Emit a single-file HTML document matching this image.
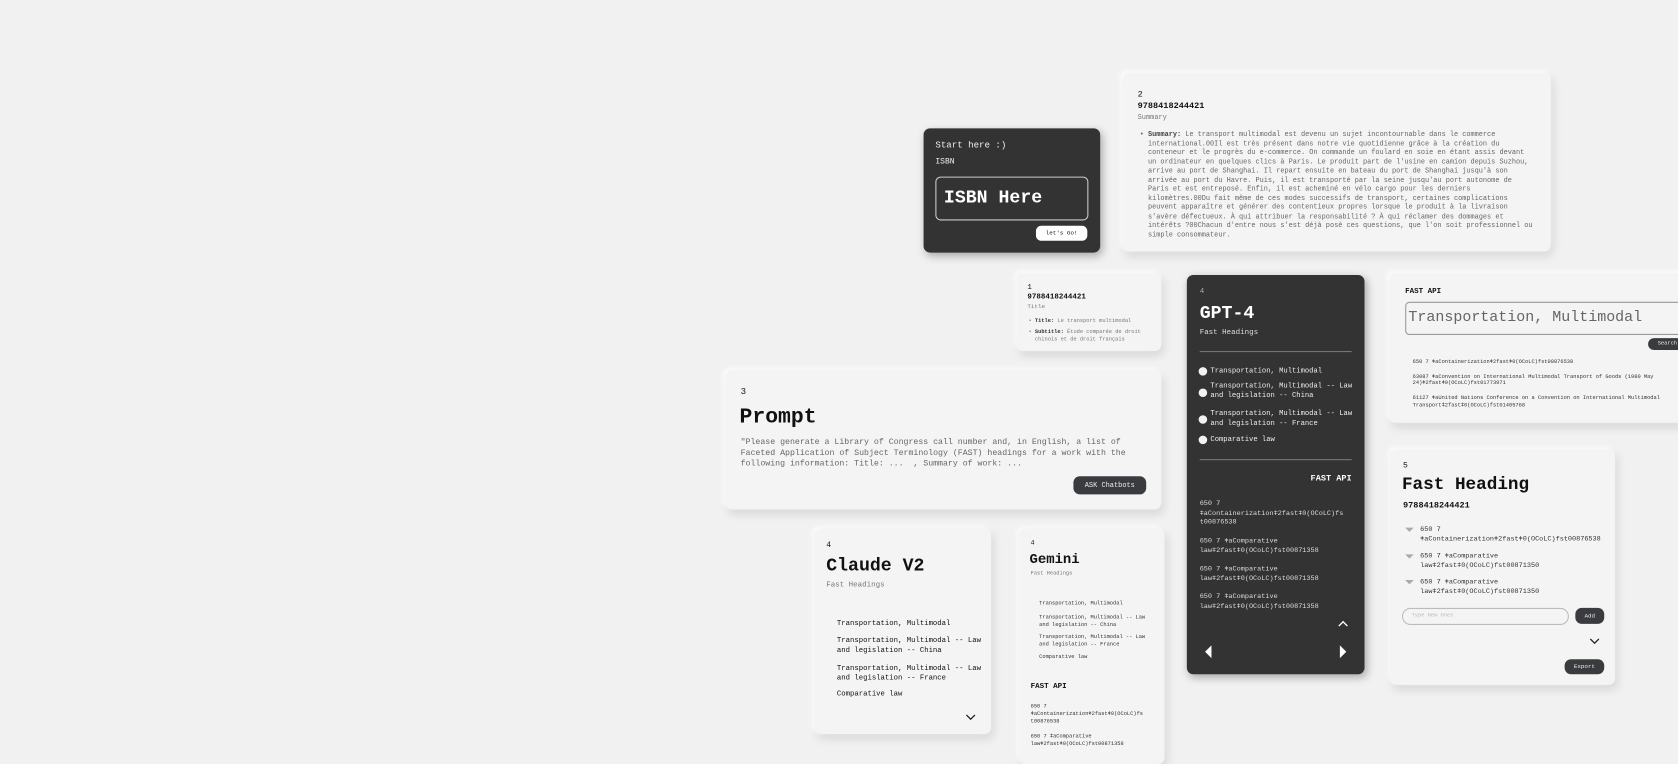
<!DOCTYPE html>
<html><head><meta charset="utf-8"><style>
html,body{margin:0;padding:0;background:#f1f1f1;width:1678px;height:748px;overflow:hidden}
#w{position:absolute;left:0;top:0;width:1568px;height:699px;transform:scale(1.0702);transform-origin:0 0;font-family:"Liberation Mono","DejaVu Sans Mono",monospace;color:#111}
.c{position:absolute;background:#f4f4f4;border-radius:6px;box-shadow:-2px -2px 5px rgba(255,255,255,.8),2px 4px 9px rgba(0,0,0,.12)}
.d{position:absolute;background:#333;border-radius:6px;box-shadow:2px 3px 8px rgba(0,0,0,.3);color:#eee}
.a{position:absolute;white-space:nowrap;line-height:1}
.b{font-weight:bold}
.g{color:#777}
.btn{position:absolute;background:#3a3b3e;color:#eee;border-radius:6px;text-align:center}
.dot{position:absolute;width:8px;height:8px;border-radius:50%;background:#f2f2f2}
.tri{position:absolute;width:0;height:0;border-left:4px solid transparent;border-right:4px solid transparent;border-top:4px solid #aaa}
</style></head><body><div id="w">

<div class="d" style="left:863px;top:120px;width:165px;height:116px">
<div class="a" style="left:11px;top:12px;font-size:8.5px">Start here :)</div>
<div class="a" style="left:11px;top:29px;font-size:7.5px">ISBN</div>
<div style="position:absolute;left:11px;top:45px;width:141px;height:39px;border:1px solid #ccc;border-radius:5px"></div>
<div class="a b" style="left:19px;top:57px;font-size:17px;color:#fff">ISBN Here</div>
<div style="position:absolute;left:105px;top:91px;width:48px;height:14px;background:#fff;border-radius:5px;color:#111;font-size:5.5px;text-align:center;line-height:14px">let's Go!</div>
</div>

<div class="c" style="left:1049px;top:68px;width:400px;height:167px">
<div class="a" style="left:14px;top:17px;font-size:8px">2</div>
<div class="a b" style="left:14px;top:28px;font-size:8px">9788418244421</div>
<div class="a g" style="left:14px;top:39px;font-size:6.5px">Summary</div>
<div style="position:absolute;left:16px;top:54px;font-size:6.45px;line-height:8.55px;color:#666;white-space:pre">• <b style="color:#444">Summary:</b> Le transport multimodal est devenu un sujet incontournable dans le commerce
  international.00Il est très présent dans notre vie quotidienne grâce à la création du
  conteneur et le progrès du e-commerce. On commande un foulard en soie en étant assis devant
  un ordinateur en quelques clics à Paris. Le produit part de l'usine en camion depuis Suzhou,
  arrive au port de Shanghai. Il repart ensuite en bateau du port de Shanghai jusqu'à son
  arrivée au port du Havre. Puis, il est transporté par la seine jusqu'au port autonome de
  Paris et est entreposé. Enfin, il est acheminé en vélo cargo pour les derniers
  kilomètres.00Du fait même de ces modes successifs de transport, certaines complications
  peuvent apparaître et générer des contentieux propres lorsque le produit à la livraison
  s'avère défectueux. À qui attribuer la responsabilité ? À qui réclamer des dommages et
  intérêts ?00Chacun d'entre nous s'est déjà posé ces questions, que l'on soit professionnel ou
  simple consommateur.</div>
</div>

<div class="c" style="left:950px;top:255px;width:135px;height:73px">
<div class="a" style="left:10px;top:11px;font-size:7px">1</div>
<div class="a b" style="left:10px;top:20px;font-size:7px">9788418244421</div>
<div class="a g" style="left:10px;top:29px;font-size:5.5px">Title</div>
<div style="position:absolute;left:11px;top:42px;font-size:5px;line-height:6.5px;color:#777;white-space:pre">• <b style="color:#333">Title:</b> Le transport multimodal</div>
<div style="position:absolute;left:11px;top:52px;font-size:5px;line-height:6.5px;color:#777;white-space:pre">• <b style="color:#333">Subtitle:</b> Étude comparée de droit
  chinois et de droit français</div>
</div>

<div class="d" style="left:1109px;top:257px;width:166px;height:373px">
<div class="a" style="left:12px;top:13px;font-size:7px;color:#aaa">4</div>
<div class="a b" style="left:12px;top:28px;font-size:17px;color:#fff">GPT-4</div>
<div class="a" style="left:12px;top:51px;font-size:7px;color:#ddd">Fast Headings</div>
<div style="position:absolute;left:12px;top:71px;width:142px;height:1px;background:#777"></div>
<div class="dot" style="left:11px;top:86px"></div>
<div style="position:absolute;left:22px;top:86px;font-size:6.7px;line-height:9px;white-space:pre">Transportation, Multimodal</div>
<div class="dot" style="left:11px;top:106px"></div>
<div style="position:absolute;left:22px;top:100px;font-size:6.7px;line-height:9px;white-space:pre">Transportation, Multimodal -- Law
and legislation -- China</div>
<div class="dot" style="left:11px;top:131px"></div>
<div style="position:absolute;left:22px;top:126px;font-size:6.7px;line-height:9px;white-space:pre">Transportation, Multimodal -- Law
and legislation -- France</div>
<div class="dot" style="left:11px;top:150px"></div>
<div style="position:absolute;left:22px;top:150px;font-size:6.7px;line-height:9px;white-space:pre">Comparative law</div>
<div style="position:absolute;left:12px;top:172px;width:142px;height:1px;background:#777"></div>
<div class="a b" style="right:12px;top:187px;font-size:8px;color:#fff">FAST API</div>
<div style="position:absolute;left:12px;top:210px;font-size:6.4px;line-height:8.7px;white-space:pre;color:#ddd">650 7
ǂaContainerizationǂ2fastǂ0(OCoLC)fs
t00876538

650 7 ǂaComparative
lawǂ2fastǂ0(OCoLC)fst00871358

650 7 ǂaComparative
lawǂ2fastǂ0(OCoLC)fst00871358

650 7 ǂaComparative
lawǂ2fastǂ0(OCoLC)fst00871358</div>
<svg style="position:absolute;left:141px;top:322px" width="10" height="7"><path d="M1 6 L5 2 L9 6" stroke="#fff" stroke-width="1.3" fill="none"/></svg>
<div style="position:absolute;left:17px;top:346px;width:0;height:0;border-top:6px solid transparent;border-bottom:6px solid transparent;border-right:6px solid #fff"></div>
<div style="position:absolute;left:143px;top:346px;width:0;height:0;border-top:6px solid transparent;border-bottom:6px solid transparent;border-left:6px solid #fff"></div>
</div>

<div class="c" style="left:1298px;top:255px;width:300px;height:140px;border-radius:6px 0 0 6px">
<div class="a b" style="left:15px;top:15px;font-size:7px">FAST API</div>
<div style="position:absolute;left:15px;top:27px;width:290px;height:29px;border:1px solid #999;border-radius:4px"></div>
<div class="a" style="left:18px;top:35px;font-size:14px;color:#666">Transportation, Multimodal</div>
<div class="btn" style="left:242px;top:61px;width:36px;height:11px;font-size:5px;line-height:11px">Search</div>
<div style="position:absolute;left:22px;top:80px;font-size:5px;line-height:6.8px;white-space:pre;color:#333">650 7 ǂaContainerizationǂ2fastǂ0(OCoLC)fst00876538

63087 ǂaConvention on International Multimodal Transport of Goods (1980 May
24)ǂ2fastǂ0(OCoLC)fst01773971

61127 ǂaUnited Nations Conference on a Convention on International Multimodal
Transportǂ2fastǂ0(OCoLC)fst01405768</div>
</div>

<div class="c" style="left:678px;top:346px;width:407px;height:130px">
<div class="a" style="left:14px;top:16px;font-size:8.5px">3</div>
<div class="a b" style="left:13px;top:35px;font-size:20px">Prompt</div>
<div style="position:absolute;left:14px;top:63px;font-size:7.7px;line-height:10px;white-space:pre;color:#666">"Please generate a Library of Congress call number and, in English, a list of
Faceted Application of Subject Terminology (FAST) headings for a work with the
following information: Title: ...  , Summary of work: ...</div>
<div class="btn" style="left:325px;top:99px;width:68px;height:17px;font-size:6.5px;line-height:17px">ASK Chatbots</div>
</div>

<div class="c" style="left:761px;top:494px;width:165px;height:192px">
<div class="a" style="left:11px;top:13px;font-size:7.5px">4</div>
<div class="a b" style="left:11px;top:27px;font-size:17px">Claude V2</div>
<div class="a g" style="left:11px;top:50px;font-size:7px">Fast Headings</div>
<div style="position:absolute;left:21px;top:85px;font-size:6.8px;line-height:9px;white-space:pre">Transportation, Multimodal</div>
<div style="position:absolute;left:21px;top:101px;font-size:6.8px;line-height:9px;white-space:pre">Transportation, Multimodal -- Law
and legislation -- China</div>
<div style="position:absolute;left:21px;top:127px;font-size:6.8px;line-height:9px;white-space:pre">Transportation, Multimodal -- Law
and legislation -- France</div>
<div style="position:absolute;left:21px;top:151px;font-size:6.8px;line-height:9px;white-space:pre">Comparative law</div>
<svg style="position:absolute;left:141px;top:173px" width="10" height="7"><path d="M1 1 L5 5 L9 1" stroke="#222" stroke-width="1.2" fill="none"/></svg>
</div>

<div class="c" style="left:952px;top:494px;width:136px;height:220px">
<div class="a" style="left:11px;top:11px;font-size:6px">4</div>
<div class="a b" style="left:10px;top:22px;font-size:13px">Gemini</div>
<div class="a g" style="left:11px;top:40px;font-size:5px">Fast Headings</div>
<div style="position:absolute;left:19px;top:67px;font-size:5px;line-height:7px;white-space:pre;color:#333">Transportation, Multimodal</div>
<div style="position:absolute;left:19px;top:80px;font-size:5px;line-height:7px;white-space:pre;color:#333">Transportation, Multimodal -- Law
and legislation -- China</div>
<div style="position:absolute;left:19px;top:98px;font-size:5px;line-height:7px;white-space:pre;color:#333">Transportation, Multimodal -- Law
and legislation -- France</div>
<div style="position:absolute;left:19px;top:117px;font-size:5px;line-height:7px;white-space:pre;color:#333">Comparative law</div>
<div class="a b" style="left:11px;top:145px;font-size:7px">FAST API</div>
<div style="position:absolute;left:11px;top:163px;font-size:5px;line-height:7px;white-space:pre;color:#333">650 7
ǂaContainerizationǂ2fastǂ0(OCoLC)fs
t00876538

650 7 ǂaComparative
lawǂ2fastǂ0(OCoLC)fst00871358</div>
</div>

<div class="c" style="left:1299px;top:420px;width:210px;height:220px">
<div class="a" style="left:12px;top:13px;font-size:7.5px">5</div>
<div class="a b" style="left:11px;top:25px;font-size:16.5px">Fast Heading</div>
<div class="a b" style="left:12px;top:49px;font-size:8px">9788418244421</div>
<div class="tri" style="left:14px;top:73px"></div>
<div style="position:absolute;left:28px;top:71px;font-size:6.4px;line-height:8.5px;white-space:pre;color:#333">650 7
ǂaContainerizationǂ2fastǂ0(OCoLC)fst00876538</div>
<div class="tri" style="left:14px;top:98px"></div>
<div style="position:absolute;left:28px;top:96px;font-size:6.4px;line-height:8.5px;white-space:pre;color:#333">650 7 ǂaComparative
lawǂ2fastǂ0(OCoLC)fst00871350</div>
<div class="tri" style="left:14px;top:122px"></div>
<div style="position:absolute;left:28px;top:120px;font-size:6.4px;line-height:8.5px;white-space:pre;color:#333">650 7 ǂaComparative
lawǂ2fastǂ0(OCoLC)fst00871350</div>
<div style="position:absolute;left:11px;top:148px;width:154px;height:14px;border:1px solid #bbb;border-radius:8px"></div>
<div class="a" style="left:20px;top:153px;font-size:5px;color:#bbb">Type New Ones</div>
<div class="btn" style="left:173px;top:148px;width:27px;height:15px;font-size:5.5px;line-height:15px">Add</div>
<svg style="position:absolute;left:186px;top:176px" width="10" height="7"><path d="M1 1 L5 5 L9 1" stroke="#222" stroke-width="1.2" fill="none"/></svg>
<div class="btn" style="left:163px;top:196px;width:37px;height:14px;font-size:5.5px;line-height:14px">Export</div>
</div>

</div></body></html>
